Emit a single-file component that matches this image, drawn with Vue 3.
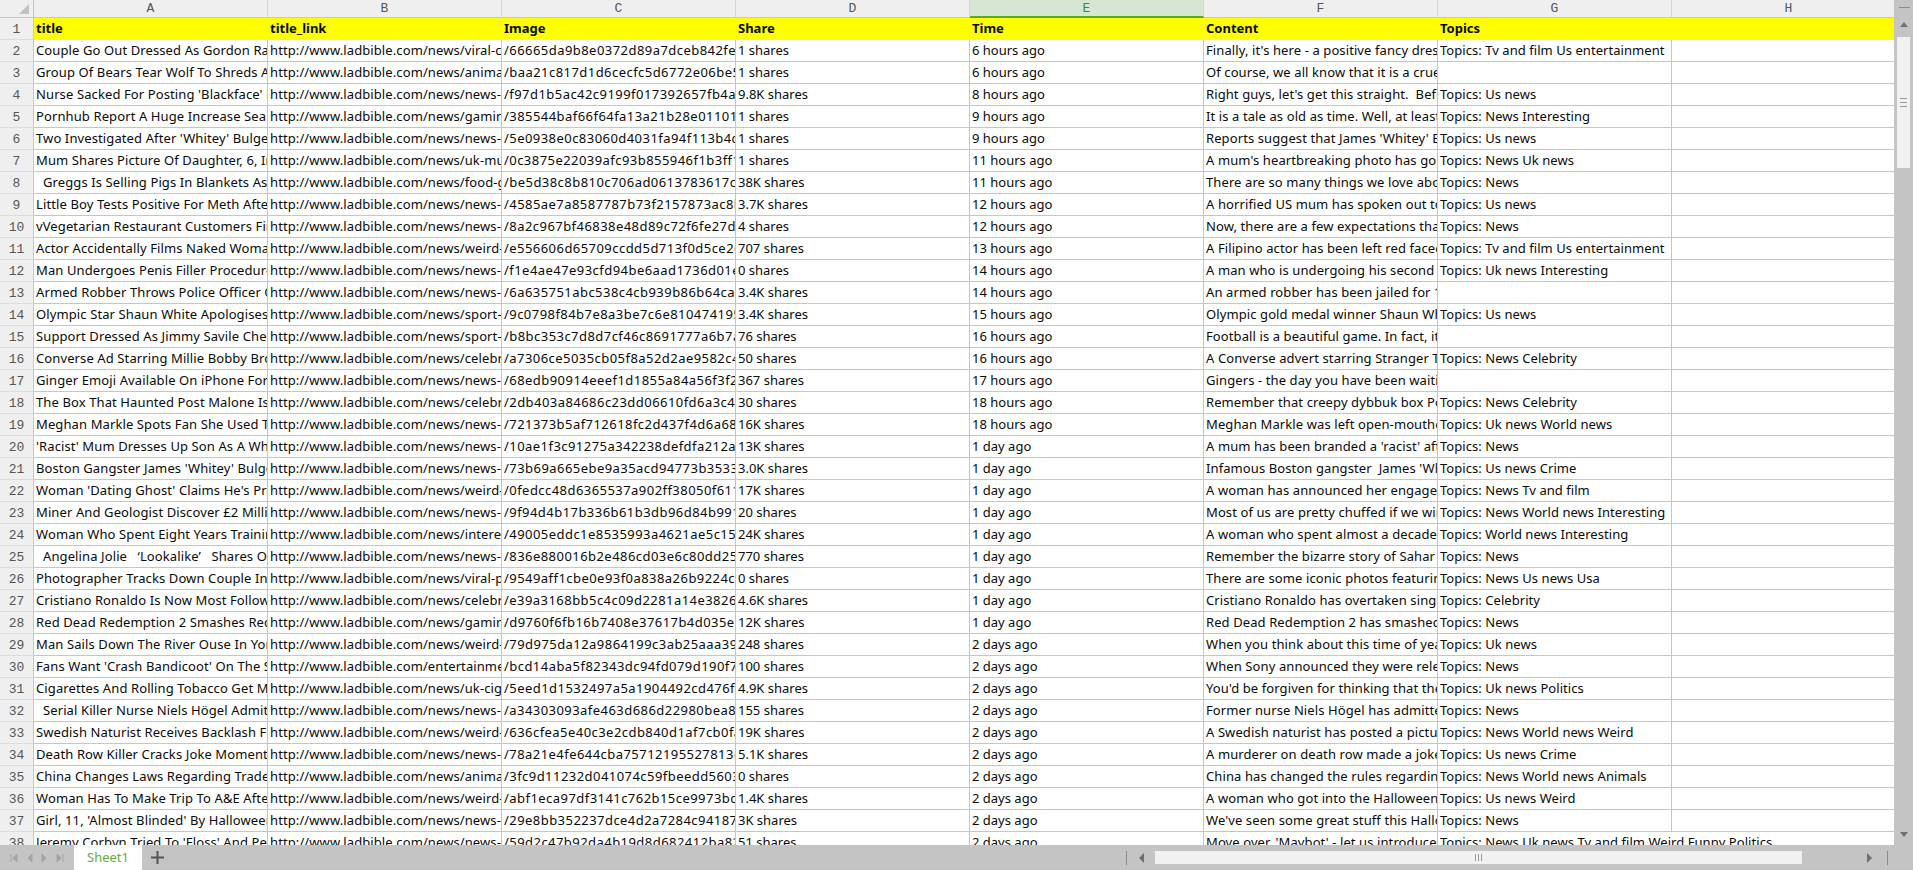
<script setup>
const L = 'http://www.ladbible.com/news/'
const columns = ['A', 'B', 'C', 'D', 'E', 'F', 'G', 'H']
const heads = ['title', 'title_link', 'Image', 'Share', 'Time', 'Content', 'Topics', '']
const raw = [
  ["Couple Go Out Dressed As Gordon Ramsay", L + "viral-couple", "/66665da9b8e0372d89a7dceb842fef10", "1 shares", "6 hours ago", "Finally, it's here - a positive fancy dress", "Topics: Tv and film Us entertainment"],
  ["Group Of Bears Tear Wolf To Shreds And", L + "animals-bears", "/baa21c817d1d6cecfc5d6772e06be5f1", "1 shares", "6 hours ago", "Of course, we all know that it is a cruel world", ""],
  ["Nurse Sacked For Posting 'Blackface' Photo", L + "news-nurse", "/f97d1b5ac42c9199f017392657fb4a21", "9.8K shares", "8 hours ago", "Right guys, let's get this straight.  Before we", "Topics: Us news"],
  ["Pornhub Report A Huge Increase Search", L + "gaming-pornhub", "/385544baf66f64fa13a21b28e01101a3", "1 shares", "9 hours ago", "It is a tale as old as time. Well, at least since", "Topics: News Interesting"],
  ["Two Investigated After 'Whitey' Bulger Death", L + "news-two", "/5e0938e0c83060d4031fa94f113b4c20", "1 shares", "9 hours ago", "Reports suggest that James 'Whitey' Bulger was", "Topics: Us news"],
  ["Mum Shares Picture Of Daughter, 6, In", L + "uk-mum-shares", "/0c3875e22039afc93b855946f1b3ff11", "1 shares", "11 hours ago", "A mum's heartbreaking photo has gone viral", "Topics: News Uk news"],
  ["  Greggs Is Selling Pigs In Blankets As Part", L + "food-greggs", "/be5d38c8b810c706ad0613783617c7a2", "38K shares", "11 hours ago", "There are so many things we love about", "Topics: News"],
  ["Little Boy Tests Positive For Meth After", L + "news-little", "/4585ae7a8587787b73f2157873ac8b10", "3.7K shares", "12 hours ago", "A horrified US mum has spoken out to warn", "Topics: Us news"],
  ["vVegetarian Restaurant Customers Find", L + "news-vegetarian", "/8a2c967bf46838e48d89c72f6fe27d15", "4 shares", "12 hours ago", "Now, there are a few expectations that", "Topics: News"],
  ["Actor Accidentally Films Naked Woman", L + "weird-actor", "/e556606d65709ccdd5d713f0d5ce2c41", "707 shares", "13 hours ago", "A Filipino actor has been left red faced after", "Topics: Tv and film Us entertainment"],
  ["Man Undergoes Penis Filler Procedure", L + "news-man", "/f1e4ae47e93cfd94be6aad1736d01e70", "0 shares", "14 hours ago", "A man who is undergoing his second", "Topics: Uk news Interesting"],
  ["Armed Robber Throws Police Officer Out", L + "news-armed", "/6a635751abc538c4cb939b86b64ca2f1", "3.4K shares", "14 hours ago", "An armed robber has been jailed for 10 years", ""],
  ["Olympic Star Shaun White Apologises For", L + "sport-olympic", "/9c0798f84b7e8a3be7c6e810474195c2", "3.4K shares", "15 hours ago", "Olympic gold medal winner Shaun White has", "Topics: Us news"],
  ["Support Dressed As Jimmy Savile Cheered", L + "sport-support", "/b8bc353c7d8d7cf46c8691777a6b7a10", "76 shares", "16 hours ago", "Football is a beautiful game. In fact, it is", ""],
  ["Converse Ad Starring Millie Bobby Brown", L + "celebrity-converse", "/a7306ce5035cb05f8a52d2ae9582c4f3", "50 shares", "16 hours ago", "A Converse advert starring Stranger Things", "Topics: News Celebrity"],
  ["Ginger Emoji Available On iPhone For", L + "news-ginger", "/68edb90914eeef1d1855a84a56f3f2e7", "367 shares", "17 hours ago", "Gingers - the day you have been waiting for", ""],
  ["The Box That Haunted Post Malone Is", L + "celebrity-the-box", "/2db403a84686c23dd06610fd6a3c4a81", "30 shares", "18 hours ago", "Remember that creepy dybbuk box Post", "Topics: News Celebrity"],
  ["Meghan Markle Spots Fan She Used To", L + "news-meghan", "/721373b5af712618fc2d437f4d6a68c0", "16K shares", "18 hours ago", "Meghan Markle was left open-mouthed when", "Topics: Uk news World news"],
  ["'Racist' Mum Dresses Up Son As A White", L + "news-racist", "/10ae1f3c91275a342238defdfa212a90", "13K shares", "1 day ago", "A mum has been branded a 'racist' after", "Topics: News"],
  ["Boston Gangster James 'Whitey' Bulger", L + "news-boston", "/73b69a665ebe9a35acd94773b3533d2a", "3.0K shares", "1 day ago", "Infamous Boston gangster  James 'Whitey'", "Topics: Us news Crime"],
  ["Woman 'Dating Ghost' Claims He's Proposed", L + "weird-woman", "/0fedcc48d6365537a902ff38050f611c", "17K shares", "1 day ago", "A woman has announced her engagement", "Topics: News Tv and film"],
  ["Miner And Geologist Discover £2 Million", L + "news-miner", "/9f94d4b17b336b61b3db96d84b991f03", "20 shares", "1 day ago", "Most of us are pretty chuffed if we win", "Topics: News World news Interesting"],
  ["Woman Who Spent Eight Years Training", L + "interesting-woman", "/49005eddc1e8535993a4621ae5c15b22", "24K shares", "1 day ago", "A woman who spent almost a decade", "Topics: World news Interesting"],
  ["  Angelina Jolie   ‘Lookalike’   Shares Of", L + "news-angelina", "/836e880016b2e486cd03e6c80dd25a41", "770 shares", "1 day ago", "Remember the bizarre story of Sahar Tabar", "Topics: News"],
  ["Photographer Tracks Down Couple In", L + "viral-photographer", "/9549aff1cbe0e93f0a838a26b9224c71", "0 shares", "1 day ago", "There are some iconic photos featuring", "Topics: News Us news Usa"],
  ["Cristiano Ronaldo Is Now Most Followed", L + "celebrity-cristiano", "/e39a3168bb5c4c09d2281a14e3826b10", "4.6K shares", "1 day ago", "Cristiano Ronaldo has overtaken singer", "Topics: Celebrity"],
  ["Red Dead Redemption 2 Smashes Record", L + "gaming-red", "/d9760f6fb16b7408e37617b4d035e2c3", "12K shares", "1 day ago", "Red Dead Redemption 2 has smashed", "Topics: News"],
  ["Man Sails Down The River Ouse In York", L + "weird-man", "/79d975da12a9864199c3ab25aaa39a18", "248 shares", "2 days ago", "When you think about this time of year", "Topics: Uk news"],
  ["Fans Want 'Crash Bandicoot' On The Switch", "http://www.ladbible.com/entertainment-fans", "/bcd14aba5f82343dc94fd079d190f7a2", "100 shares", "2 days ago", "When Sony announced they were releasing", "Topics: News"],
  ["Cigarettes And Rolling Tobacco Get More", L + "uk-cigarettes", "/5eed1d1532497a5a1904492cd476f1b0", "4.9K shares", "2 days ago", "You'd be forgiven for thinking that the", "Topics: Uk news Politics"],
  ["  Serial Killer Nurse Niels Högel Admits To", L + "news-serial", "/a34303093afe463d686d22980bea84f1", "155 shares", "2 days ago", "Former nurse Niels Högel has admitted", "Topics: News"],
  ["Swedish Naturist Receives Backlash For", L + "weird-swedish", "/636cfea5e40c3e2cdb840d1af7cb0fa2", "19K shares", "2 days ago", "A Swedish naturist has posted a picture", "Topics: News World news Weird"],
  ["Death Row Killer Cracks Joke Moments", L + "news-death", "/78a21e4fe644cba75712195527813c40", "5.1K shares", "2 days ago", "A murderer on death row made a joke", "Topics: Us news Crime"],
  ["China Changes Laws Regarding Trade In", L + "animals-china", "/3fc9d11232d041074c59fbeedd560312", "0 shares", "2 days ago", "China has changed the rules regarding", "Topics: News World news Animals"],
  ["Woman Has To Make Trip To A&E After", L + "weird-woman-has", "/abf1eca97df3141c762b15ce9973bc20", "1.4K shares", "2 days ago", "A woman who got into the Halloween", "Topics: Us news Weird"],
  ["Girl, 11, 'Almost Blinded' By Halloween", L + "news-girl", "/29e8bb352237dce4d2a7284c94187a03", "3K shares", "2 days ago", "We've seen some great stuff this Halloween", "Topics: News"],
  ["Jeremy Corbyn Tried To 'Floss' And People", L + "news-jeremy", "/59d2c47b92da4b19d8d682412ba82c17", "51 shares", "2 days ago", "Move over, 'Maybot' - let us introduce", "Topics: News Uk news Tv and film Weird Funny Politics"]
]
const rows = raw.map((r, i) => ({
  n: i + 2,
  cells: [...r, ''],
  spill: r[6].length > 40
}))
</script>

<template>
  <div class="app">
    <div class="main">
      <div class="sheet">
        <div class="row colbar">
          <div class="corner"><span class="tri"></span></div>
          <div v-for="c in columns" :key="c" class="colhead" :class="{ sel: c === 'E' }">{{ c }}</div>
        </div>
        <div class="row">
          <div class="rowhead">1</div>
          <div v-for="(h, i) in heads" :key="i" class="cell head">{{ h }}</div>
        </div>
        <div v-for="r in rows" :key="r.n" class="row">
          <div class="rowhead">{{ r.n }}</div>
          <div
            v-for="(t, i) in r.cells"
            :key="i"
            class="cell"
            :class="['c' + i, { spill: r.spill && i === 6, spilled: r.spill && i === 7 }]"
          >{{ t }}</div>
        </div>
      </div>
      <div class="vbar">
        <span class="vdash"></span>
        <svg class="varrow" width="10" height="7" viewBox="0 0 10 7"><path d="M5 1 9 6H1z" fill="#6f6f6f"/></svg>
        <div class="vthumb"><span class="grip"></span><span class="grip"></span><span class="grip"></span></div>
        <svg class="varrow down" width="10" height="7" viewBox="0 0 10 7"><path d="M1 1h8L5 6z" fill="#6f6f6f"/></svg>
      </div>
    </div>
    <div class="bottom">
      <div class="nav">
        <svg width="10" height="10" viewBox="0 0 10 10"><path d="M2 1v8M8 1 4 5l4 4z" stroke="#a4a4a4" fill="#a4a4a4"/></svg>
        <svg width="8" height="10" viewBox="0 0 8 10"><path d="M6 1 2 5l4 4z" fill="#a4a4a4" stroke="#a4a4a4"/></svg>
        <svg width="8" height="10" viewBox="0 0 8 10"><path d="m2 1 4 4-4 4z" fill="#a4a4a4" stroke="#a4a4a4"/></svg>
        <svg width="10" height="10" viewBox="0 0 10 10"><path d="M8 1v8M2 1l4 4-4 4z" stroke="#a4a4a4" fill="#a4a4a4"/></svg>
      </div>
      <div class="tab">Sheet1</div>
      <svg class="plus" width="13" height="13" viewBox="0 0 13 13"><path d="M6.5 0v13M0 6.5h13" stroke="#555" stroke-width="2"/></svg>
      <div class="hscroll">
        <span class="sep"></span>
        <svg class="harrow left" width="6" height="10" viewBox="0 0 6 10"><path d="M5 0v10L0 5z" fill="#6f6f6f"/></svg>
        <div class="hthumb"><span class="hgrip"></span><span class="hgrip"></span><span class="hgrip"></span></div>
        <svg class="harrow right" width="6" height="10" viewBox="0 0 6 10"><path d="M1 0v10l5-5z" fill="#6f6f6f"/></svg>
        <span class="sep"></span>
      </div>
    </div>
  </div>
</template>

<style>
html, body { margin: 0; padding: 0; overflow: hidden; }
</style>

<style scoped>
.app {
  width: 1913px;
  height: 870px;
  display: flex;
  flex-direction: column;
  overflow: hidden;
  background: #fff;
  color: #0a0a0a;
  font-family: "Noto Sans", "Liberation Sans", sans-serif;
  font-size: 13px;
}
.main { flex: 1; min-height: 0; display: flex; }
.sheet { flex: 1; min-width: 0; overflow: hidden; }
.row { display: flex; height: 22px; }
.colbar { height: 18px; }
.corner {
  flex: 0 0 34px;
  box-sizing: border-box;
  position: relative;
  background: #efefef;
  border-right: 1px solid #c8c8c8;
  border-bottom: 1px solid #c8c8c8;
}
.tri {
  position: absolute;
  right: 4px;
  bottom: 3px;
  width: 0;
  height: 0;
  border-left: 10px solid transparent;
  border-bottom: 10px solid #c2c2c2;
}
.colhead {
  flex: 0 0 234px;
  box-sizing: border-box;
  background: #efefef;
  border-right: 1px solid #d4d4d4;
  border-bottom: 1px solid #c8c8c8;
  text-align: center;
  font-family: "Liberation Mono", monospace;
  font-size: 13px;
  line-height: 18px;
  color: #555;
}
.colhead.sel {
  background: #d6e6d0;
  color: #3f8f1f;
  border-bottom: 2px solid #5aa72f;
}
.rowhead {
  flex: 0 0 34px;
  box-sizing: border-box;
  background: #efefef;
  border-right: 1px solid #c8c8c8;
  border-bottom: 1px solid #dcdcdc;
  text-align: center;
  font-family: "Liberation Mono", monospace;
  font-size: 13px;
  line-height: 23px;
  color: #555;
}
.cell {
  flex: 0 0 234px;
  box-sizing: border-box;
  padding-left: 2px;
  border-right: 1px solid #c6c6c6;
  border-bottom: 1px solid #c6c6c6;
  white-space: pre;
  overflow: hidden;
  line-height: 20px;
}
.cell.c0 { letter-spacing: 0.11px; }
.cell.c5 { letter-spacing: 0.1px; }
.cell.c1 { letter-spacing: 0.1px; }
.cell.c2 { letter-spacing: 0.45px; }
.cell.c6 { letter-spacing: 0.05px; }
.cell.head {
  background: #ffff00;
  border: 0;
  font-weight: 700;
  line-height: 21px;
}
.cell.spill { overflow: visible; border-right-color: transparent; }
.cell.spilled { border-right: 1px solid #c6c6c6; }
.vbar {
  flex: 0 0 19px;
  position: relative;
  background: #c4c4c5;
}
.vdash { position: absolute; left: 5px; top: 7px; width: 11px; height: 1px; background: #8c8c8c; }
.varrow { position: absolute; left: 5px; top: 21px; }
.varrow.down { top: 831px; }
.vthumb {
  position: absolute;
  left: 3px;
  top: 37px;
  width: 13px;
  height: 131px;
  background: #f1f1f1;
  display: flex;
  flex-direction: column;
  align-items: center;
  justify-content: center;
  gap: 3px;
}
.grip { width: 7px; height: 1px; background: #9a9a9a; }
.bottom {
  flex: 0 0 25px;
  display: flex;
  align-items: center;
  background: #c4c4c5;
}
.nav {
  flex: 0 0 74px;
  box-sizing: border-box;
  padding: 0 9px;
  display: flex;
  align-items: center;
  justify-content: space-between;
}
.tab {
  flex: 0 0 68px;
  height: 25px;
  background: #fff;
  color: #6da83c;
  text-align: center;
  line-height: 25px;
  font-size: 13px;
}
.plus { margin-left: 9px; }
.hscroll {
  margin-left: 962px;
  display: flex;
  align-items: center;
}
.sep { width: 1px; height: 14px; background: #8c8c8c; }
.harrow.left { margin: 0 10px 0 12px; }
.harrow.right { margin: 0 15px 0 64px; }
.hthumb {
  width: 647px;
  height: 13px;
  background: #f1f1f1;
  display: flex;
  align-items: center;
  justify-content: center;
  gap: 2px;
}
.hgrip { width: 1px; height: 7px; background: #9a9a9a; }
</style>
